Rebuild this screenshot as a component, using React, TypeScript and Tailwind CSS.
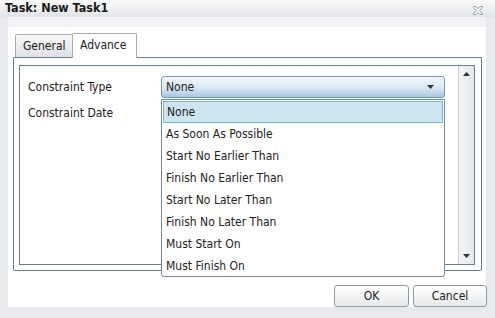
import { useState } from 'react';

const options = [
  'None',
  'As Soon As Possible',
  'Start No Earlier Than',
  'Finish No Earlier Than',
  'Start No Later Than',
  'Finish No Later Than',
  'Must Start On',
  'Must Finish On',
];

const CloseIcon = () => (
  <svg width="10" height="9" viewBox="0 0 10 9" className="block">
    <path
      d="M0.5 0.5 H3 L5 2.6 L7 0.5 H9.5 V1.5 L6.6 4.5 L9.5 7.5 V8.5 H7 L5 6.4 L3 8.5 H0.5 V7.5 L3.4 4.5 L0.5 1.5 Z"
      fill="#f4f5f6"
      stroke="#9aa1a8"
      strokeWidth="1"
    />
  </svg>
);

const Arrow = ({ up }: { up?: boolean }) => (
  <svg width="7" height="4" viewBox="0 0 7 4" className="block">
    <path d={up ? 'M0 4 L3.5 0 L7 4 Z' : 'M0 0 L7 0 L3.5 4 Z'} fill="#333" />
  </svg>
);

const App = () => {
  const [value] = useState('None');

  return (
    <div
      className="w-[495px] h-[318px] bg-[#e7e9ec] flex flex-col text-[#222] overflow-hidden"
      style={{ fontFamily: '"DejaVu Sans Condensed", "DejaVu Sans", sans-serif' }}
    >
      {/* title bar */}
      <div className="h-[17px] shrink-0 bg-gradient-to-b from-[#fbfbfb] to-[#e1e3e6] flex items-center justify-between pl-[5px] pr-[10px]">
        <span className="text-[12.5px] font-bold leading-none text-[#1a1a1a]">Task: New Task1</span>
        <div className="pt-[4px] pr-[2px]">
          <CloseIcon />
        </div>
      </div>
      <div className="h-[10px] shrink-0 bg-[#f2f3f5] ml-[8px] mr-[9px]" />

      {/* body */}
      <div className="bg-white ml-[8px] mr-[9px] h-[280px] flex flex-col px-[5px]">
        {/* tabs */}
        <div className="flex items-end h-[30px] pl-[2px] pt-[5px]">
          <div className="h-[23px] w-[58px] border border-b-0 border-[#a3abb3] bg-gradient-to-b from-[#f8f8f8] to-[#dfe2e5] rounded-t-[2px] text-[12px] flex items-center pl-[7px]">
            General
          </div>
          <div className="h-[25px] w-[65px] border border-b-0 border-[#a3abb3] bg-white rounded-t-[2px] text-[12px] -ml-px flex pt-[2px] pl-[7px] relative top-px">
            Advance
          </div>
        </div>

        {/* panel */}
        <div className="h-[214px] w-[469px] border border-[#6e7d8a] rounded-bl-[2px] rounded-br-[2px] p-[5px] pt-[7px] pr-[6px]">
          <div className="h-full border border-[#6e7d8a] flex">
            <div className="flex-1 pl-[8px] pt-[10px] flex flex-col gap-[4px]">
              <div className="flex items-center h-[22px] text-[12px]">
                <span className="w-[133px]">Constraint Type</span>
                <div className="relative">
                  <div className="w-[284px] h-[22px] rounded-[3px] border border-[#6b9bc3] bg-gradient-to-b from-[#f3f7fb] via-[#dce9f4] to-[#a9c7e2] flex items-center justify-between pl-[4px] pr-[10px]">
                    <span>{value}</span>
                    <Arrow />
                  </div>
                  <div className="absolute left-0 top-[23px] w-[284px] h-[178px] bg-white border border-[#7c8995] rounded-bl-[3px] rounded-br-[3px] flex flex-col z-10">
                    {options.map((o) => (
                      <div
                        key={o}
                        className={
                          o === value
                            ? 'h-[22px] mx-px mt-px border border-[#6fbad6] bg-[#cde5ee] flex items-center pl-[3px] shrink-0'
                            : 'h-[22px] flex items-center pl-[4px] shrink-0'
                        }
                      >
                        {o}
                      </div>
                    ))}
                  </div>
                </div>
              </div>
              <div className="flex items-center h-[22px] text-[12px]">
                <span className="w-[133px]">Constraint Date</span>
              </div>
            </div>
            {/* scrollbar */}
            <div className="w-[16px] border-l border-[#c7cdd3] bg-gradient-to-r from-[#f4f5f7] to-[#e4e7ea] flex flex-col items-center justify-between py-[6px]">
              <Arrow up />
              <Arrow />
            </div>
          </div>
        </div>

        {/* buttons */}
        <div className="flex justify-end gap-[4px] mt-[14px] -mr-[6px]">
          <button className="w-[75px] h-[22px] rounded-[3px] border border-[#8e99a3] bg-gradient-to-b from-white to-[#e6e8ea] text-[12px] text-[#222]">
            OK
          </button>
          <button className="w-[74px] h-[22px] rounded-[3px] border border-[#8e99a3] bg-gradient-to-b from-white to-[#e6e8ea] text-[12px] text-[#222]">
            Cancel
          </button>
        </div>
      </div>
    </div>
  );
};

export default App;
